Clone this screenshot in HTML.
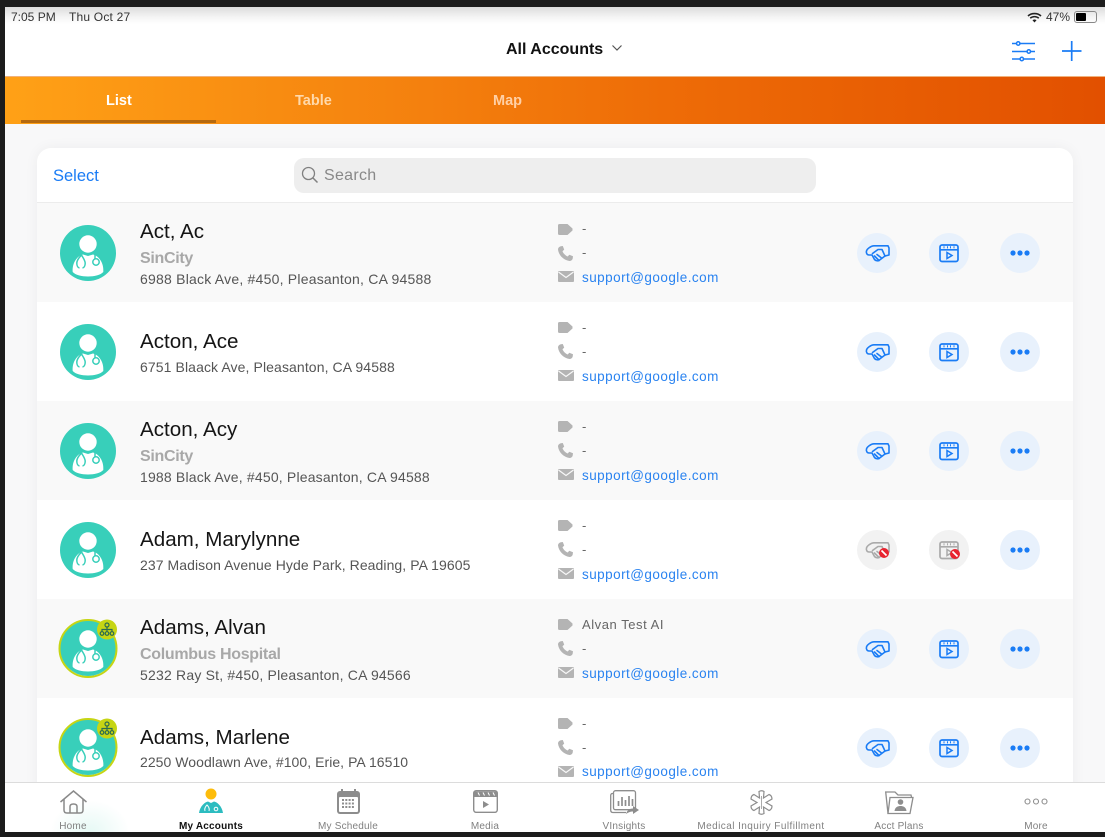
<!DOCTYPE html>
<html><head><meta charset="utf-8"><title>All Accounts</title>
<style>
*{box-sizing:border-box}
html,body{margin:0;padding:0}
body{width:1105px;height:836px;overflow:hidden;background:#1c1c1c;position:relative;font-family:"Liberation Sans",sans-serif;color:#111}
.a{position:absolute}
.t{position:absolute;white-space:nowrap;line-height:20px;height:20px}
.band{position:absolute;left:37px;width:1036px;height:99px}
.n{left:140px;font-size:20.600px;color:#151515;margin-top:1px}
.s{left:140px;font-size:16px;font-weight:bold;color:#a8a8a8;letter-spacing:-.3px;margin-top:2px}
.d{left:140px;font-size:14px;color:#555}
.c{left:582px;font-size:13px;color:#666;letter-spacing:.55px;margin-top:1px}
.m{left:582px;font-size:13.5px;color:#2a83f0;letter-spacing:.46px;margin-top:1px}
.l{font-size:10px;color:#808080;text-align:center;width:160px;letter-spacing:.2px;top:817px}
svg{position:absolute;overflow:visible}
.b{position:absolute;width:40px;height:40px;border-radius:50%;background:#e8f1fc}
.g{background:#f2f2f2}
</style></head><body>
<svg width="0" height="0" style="position:absolute">
<defs>
<symbol id="av" viewBox="0 0 56 56" overflow="visible">
<circle cx="28" cy="28" r="28" fill="#38cfba"/>
<circle cx="28" cy="19" r="8.700" fill="#fff"/>
<path d="M12.700 47C12 38 17 31 23 29.500L28 31L33 29.500C39 31 44 38 43.300 47C38 53 18 53 12.700 47Z" fill="#fff"/>
<path d="M21.500 30C20 32 17 34 16.800 38C16.800 41 18 42.800 19.500 43M21.500 30C22.500 32 25 35 25.200 38C25.200 41 24 42.800 22.500 43" fill="none" stroke="#38cfba" stroke-width="1.500"/>
<path d="M35 29.500V33.500" stroke="#38cfba" stroke-width="1.500"/>
<circle cx="36" cy="37" r="3.200" fill="none" stroke="#38cfba" stroke-width="1.500"/>
</symbol>
<symbol id="avb" viewBox="-4 -4 64 64" overflow="visible">
<use href="#av" x="0" y="0" width="56" height="56"/>
<circle cx="28" cy="28.500" r="28.500" fill="none" stroke="#c6d514" stroke-width="2"/>
<circle cx="47" cy="9.500" r="10" fill="#c6d514"/>
<g fill="none" stroke="#2c6b50" stroke-width="1.200"><circle cx="47" cy="5" r="2"/><circle cx="42" cy="13.500" r="1.800"/><circle cx="47" cy="13.500" r="1.800"/><circle cx="52" cy="13.500" r="1.800"/><path d="M47 7V11.500M42 11.500V9.500H52V11.500"/></g>
</symbol>
<symbol id="hs" viewBox="-1 -2 25 19" overflow="visible">
<g fill="none" stroke="currentColor" stroke-width="1.600" stroke-linejoin="round" stroke-linecap="round">
<path d="M8 .8H22L23 3V10L19 11L13 15.500C12 16 10 16 8.500 14.500L6 10H3C1 10 0 8 .5 6C1 4 5 .8 8 .8Z"/>
<path d="M6.500 8.500L12 4.500H16L19 11M8.500 11L13 15.500M11 9.500L15.500 13"/>
</g></symbol>
<symbol id="vd" viewBox="0 0 20 19" overflow="visible">
<rect x="1" y="1" width="18" height="16.500" rx="2" fill="none" stroke="currentColor" stroke-width="1.700"/>
<path d="M1 5.800H19" stroke="currentColor" stroke-width="1.700"/>
<path d="M4.500 3.300H5.500M8 3.300H9M11 3.300H12M14.500 3.300H15.500" stroke="currentColor" stroke-width="2.200"/>
<path d="M8 8.500L13 11.500L8 14.500Z" fill="none" stroke="currentColor" stroke-width="1.500"/>
</symbol>
<symbol id="no" viewBox="0 0 10 10"><circle cx="5" cy="5" r="5" fill="#e8232f"/><path d="M2.500 2.500L7.500 7.500" stroke="#fff" stroke-width="1.700"/></symbol>
<symbol id="tag" viewBox="0 0 15 11"><path d="M1.500 0H9.500L14.500 4.500V6.500L9.500 11H1.500A1.500 1.500 0 0 1 0 9.500V1.500A1.500 1.500 0 0 1 1.500 0Z" fill="#b4b4b4"/></symbol>
<symbol id="ph" viewBox="0 0 15 15"><path d="M2.800.3L4.800 0L6.200 3.600L4.500 5.200C5.200 7.200 7.500 9.700 9.700 10.500L11.300 8.800L15 10.300L14.700 12.500C14.300 14.300 12.800 15 11.500 15C5.500 14.200 .8 9.300 0 3.500C0 2 1 .7 2.800.3Z" fill="#b4b4b4"/></symbol>
<symbol id="ml" viewBox="0 0 16 11"><rect width="16" height="11" rx="1" fill="#b4b4b4"/><path d="M.5 1L8 6.500L15.500 1" fill="none" stroke="#f8f8f8" stroke-width="1.200"/></symbol>
</defs></svg>

<div class="a" style="left:5px;top:7px;width:1100px;height:825px;background:#f8f8f9"></div>
<div class="a" style="left:5px;top:7px;width:1100px;height:69px;background:linear-gradient(#dcdcdc 0,#f4f4f4 10px,#fff 17px)"></div>
<div class="t" style="left:11px;top:7px;font-size:12px;color:#333">7:05 PM</div>
<div class="t" style="left:69px;top:7px;font-size:12px;color:#333;letter-spacing:.2px">Thu Oct 27</div>
<svg style="left:1027px;top:12px" width="15" height="11" viewBox="0 0 15 11"><path d="M1 4C4.500.8 10.500.8 14 4M3.200 6.200C5.600 4.100 9.400 4.100 11.800 6.200" fill="none" stroke="#222" stroke-width="1.600"/><path d="M5.500 8.300C6.700 7.300 8.300 7.300 9.500 8.300L7.500 10.500Z" fill="#222"/></svg>
<div class="t" style="left:1046px;top:7px;font-size:12px;color:#333">47%</div>
<div class="a" style="left:1074px;top:11px;width:23px;height:12px;border:1px solid #888;border-radius:3px"><div style="width:10px;height:8px;margin:1px;background:#000;border-radius:1px"></div></div>

<div class="t" style="left:506px;top:39px;margin-top:0;font-size:16px;font-weight:bold;color:#111;padding-top:1px">All Accounts</div>
<svg style="left:612px;top:45px" width="10" height="6" viewBox="0 0 10 6"><path d="M.5.500L5 5L9.500.500" fill="none" stroke="#555" stroke-width="1.200"/></svg>
<svg style="left:1012px;top:41px" width="24" height="20" viewBox="0 0 24 20"><g fill="none" stroke="#1a7cf5" stroke-width="1.500"><path d="M0 2.500H4.500M8 2.500H23M0 10.500H15M18.500 10.500H23M0 18H8M11.500 18H23"/><circle cx="6.200" cy="2.500" r="1.700"/><circle cx="16.800" cy="10.500" r="1.700"/><circle cx="9.800" cy="18" r="1.700"/></g></svg>
<svg style="left:1062px;top:41px" width="20" height="20" viewBox="0 0 20 20"><path d="M0 10H19.500M9.700 0V20" stroke="#1a7cf5" stroke-width="1.700"/></svg>

<div class="a" style="left:5px;top:76px;width:1100px;height:48px;background:linear-gradient(90deg,#ffa116,#f5830f 35%,#ee6c07 60%,#e25000);border-top:1px solid #f1b27c"></div>
<div class="t" style="left:106px;top:91px;font-size:14.500px;font-weight:bold;color:#fff">List</div>
<div class="t" style="left:295px;top:91px;font-size:14.500px;font-weight:bold;color:#ffd9ab">Table</div>
<div class="t" style="left:493px;top:91px;font-size:14.500px;font-weight:bold;color:#ffd0a6">Map</div>
<div class="a" style="left:21px;top:120px;width:195px;height:3px;background:#b5690f"></div>

<div class="a" style="left:37px;top:148px;width:1036px;height:680px;background:#fff;border-radius:14px 14px 0 0;box-shadow:0 0 14px rgba(0,0,0,.05)"></div>
<div class="t" style="left:53px;top:166px;font-size:16.500px;color:#1a7cf5">Select</div>
<div class="a" style="left:294px;top:158px;width:522px;height:35px;background:#eee;border-radius:10px"></div>
<svg style="left:301px;top:166px" width="18" height="18" viewBox="0 0 18 18"><circle cx="7.500" cy="7.500" r="6" fill="none" stroke="#808080" stroke-width="1.300"/><path d="M12 12L16.500 16.500" stroke="#808080" stroke-width="1.500"/></svg>
<div class="t" style="left:324px;top:166px;font-size:16px;color:#888;letter-spacing:.3px">Search</div>
<div class="a" style="left:37px;top:202px;width:1036px;height:1px;background:#ececec"></div>

<div class="band" style="top:203px;background:#f9f9f9"></div>
<div class="band" style="top:401px;background:#f9f9f9"></div>
<div class="band" style="top:599px;background:#f9f9f9"></div>

<!-- row 1 -->
<svg style="left:60px;top:225px" width="56" height="56"><use href="#av" width="56" height="56"/></svg>
<div class="t n" style="top:221px">Act, Ac</div>
<div class="t s" style="top:247px">SinCity</div>
<div class="t d" style="top:269px;letter-spacing:.22px">6988 Black Ave, #450, Pleasanton, CA 94588</div>
<svg style="left:558px;top:223.500px" width="15" height="11"><use href="#tag" width="15" height="11"/></svg>
<div class="t c" style="top:218px">-</div>
<svg style="left:558px;top:245.500px" width="15" height="15"><use href="#ph" width="15" height="15"/></svg>
<div class="t c" style="top:242px">-</div>
<svg style="left:558px;top:271px" width="16" height="11"><use href="#ml" width="16" height="11"/></svg>
<div class="t m" style="top:267px">support@google.com</div>
<div class="b" style="left:857px;top:233px"></div><svg style="left:865px;top:243px;color:#1a7cf5" width="25" height="19"><use href="#hs" width="25" height="19"/></svg>
<div class="b" style="left:929px;top:233px"></div><svg style="left:939px;top:244px;color:#1a7cf5" width="20" height="19"><use href="#vd" width="20" height="19"/></svg>
<div class="b" style="left:1000px;top:233px"></div><svg style="left:1010px;top:250px" width="20" height="6"><circle cx="3" cy="3" r="2.600" fill="#1a7cf5"/><circle cx="10" cy="3" r="2.600" fill="#1a7cf5"/><circle cx="17" cy="3" r="2.600" fill="#1a7cf5"/></svg>

<!-- row 2 -->
<svg style="left:60px;top:324px" width="56" height="56"><use href="#av" width="56" height="56"/></svg>
<div class="t n" style="top:331px">Acton, Ace</div>
<div class="t d" style="top:357px;letter-spacing:.1px">6751 Blaack Ave, Pleasanton, CA 94588</div>
<svg style="left:558px;top:322px" width="15" height="11"><use href="#tag" width="15" height="11"/></svg>
<div class="t c" style="top:317px">-</div>
<svg style="left:558px;top:344px" width="15" height="15"><use href="#ph" width="15" height="15"/></svg>
<div class="t c" style="top:341px">-</div>
<svg style="left:558px;top:370px" width="16" height="11"><use href="#ml" width="16" height="11"/></svg>
<div class="t m" style="top:365.500px">support@google.com</div>
<div class="b" style="left:857px;top:332px"></div><svg style="left:865px;top:342px;color:#1a7cf5" width="25" height="19"><use href="#hs" width="25" height="19"/></svg>
<div class="b" style="left:929px;top:332px"></div><svg style="left:939px;top:343px;color:#1a7cf5" width="20" height="19"><use href="#vd" width="20" height="19"/></svg>
<div class="b" style="left:1000px;top:332px"></div><svg style="left:1010px;top:349px" width="20" height="6"><circle cx="3" cy="3" r="2.600" fill="#1a7cf5"/><circle cx="10" cy="3" r="2.600" fill="#1a7cf5"/><circle cx="17" cy="3" r="2.600" fill="#1a7cf5"/></svg>

<!-- row 3 -->
<svg style="left:60px;top:423px" width="56" height="56"><use href="#av" width="56" height="56"/></svg>
<div class="t n" style="top:419px">Acton, Acy</div>
<div class="t s" style="top:445px">SinCity</div>
<div class="t d" style="top:467px;letter-spacing:.18px">1988 Black Ave, #450, Pleasanton, CA 94588</div>
<svg style="left:558px;top:421px" width="15" height="11"><use href="#tag" width="15" height="11"/></svg>
<div class="t c" style="top:416px">-</div>
<svg style="left:558px;top:443px" width="15" height="15"><use href="#ph" width="15" height="15"/></svg>
<div class="t c" style="top:440px">-</div>
<svg style="left:558px;top:469px" width="16" height="11"><use href="#ml" width="16" height="11"/></svg>
<div class="t m" style="top:464.500px">support@google.com</div>
<div class="b" style="left:857px;top:431px"></div><svg style="left:865px;top:441px;color:#1a7cf5" width="25" height="19"><use href="#hs" width="25" height="19"/></svg>
<div class="b" style="left:929px;top:431px"></div><svg style="left:939px;top:442px;color:#1a7cf5" width="20" height="19"><use href="#vd" width="20" height="19"/></svg>
<div class="b" style="left:1000px;top:431px"></div><svg style="left:1010px;top:448px" width="20" height="6"><circle cx="3" cy="3" r="2.600" fill="#1a7cf5"/><circle cx="10" cy="3" r="2.600" fill="#1a7cf5"/><circle cx="17" cy="3" r="2.600" fill="#1a7cf5"/></svg>

<!-- row 4 -->
<svg style="left:60px;top:522px" width="56" height="56"><use href="#av" width="56" height="56"/></svg>
<div class="t n" style="top:529px">Adam, Marylynne</div>
<div class="t d" style="top:555px;letter-spacing:.07px">237 Madison Avenue Hyde Park, Reading, PA 19605</div>
<svg style="left:558px;top:520px" width="15" height="11"><use href="#tag" width="15" height="11"/></svg>
<div class="t c" style="top:515px">-</div>
<svg style="left:558px;top:542px" width="15" height="15"><use href="#ph" width="15" height="15"/></svg>
<div class="t c" style="top:539px">-</div>
<svg style="left:558px;top:568px" width="16" height="11"><use href="#ml" width="16" height="11"/></svg>
<div class="t m" style="top:563.500px">support@google.com</div>
<div class="b g" style="left:857px;top:530px"></div><svg style="left:865px;top:540px;color:#aaa" width="25" height="19"><use href="#hs" width="25" height="19"/></svg><svg style="left:879px;top:548px" width="10" height="10"><use href="#no" width="10" height="10"/></svg>
<div class="b g" style="left:929px;top:530px"></div><svg style="left:939px;top:541px;color:#aaa" width="20" height="19"><use href="#vd" width="20" height="19"/></svg><svg style="left:950px;top:549px" width="10" height="10"><use href="#no" width="10" height="10"/></svg>
<div class="b" style="left:1000px;top:530px"></div><svg style="left:1010px;top:547px" width="20" height="6"><circle cx="3" cy="3" r="2.600" fill="#1a7cf5"/><circle cx="10" cy="3" r="2.600" fill="#1a7cf5"/><circle cx="17" cy="3" r="2.600" fill="#1a7cf5"/></svg>

<!-- row 5 -->
<svg style="left:60px;top:620px" width="56" height="56"><use href="#avb" x="-4" y="-4" width="64" height="64"/></svg>
<div class="t n" style="top:617px">Adams, Alvan</div>
<div class="t s" style="top:643px">Columbus Hospital</div>
<div class="t d" style="top:665px;letter-spacing:.2px">5232 Ray St, #450, Pleasanton, CA 94566</div>
<svg style="left:558px;top:619px" width="15" height="11"><use href="#tag" width="15" height="11"/></svg>
<div class="t c" style="top:614px">Alvan Test AI</div>
<svg style="left:558px;top:641px" width="15" height="15"><use href="#ph" width="15" height="15"/></svg>
<div class="t c" style="top:638px">-</div>
<svg style="left:558px;top:667px" width="16" height="11"><use href="#ml" width="16" height="11"/></svg>
<div class="t m" style="top:662.500px">support@google.com</div>
<div class="b" style="left:857px;top:629px"></div><svg style="left:865px;top:639px;color:#1a7cf5" width="25" height="19"><use href="#hs" width="25" height="19"/></svg>
<div class="b" style="left:929px;top:629px"></div><svg style="left:939px;top:640px;color:#1a7cf5" width="20" height="19"><use href="#vd" width="20" height="19"/></svg>
<div class="b" style="left:1000px;top:629px"></div><svg style="left:1010px;top:646px" width="20" height="6"><circle cx="3" cy="3" r="2.600" fill="#1a7cf5"/><circle cx="10" cy="3" r="2.600" fill="#1a7cf5"/><circle cx="17" cy="3" r="2.600" fill="#1a7cf5"/></svg>

<!-- row 6 -->
<svg style="left:60px;top:719px" width="56" height="56"><use href="#avb" x="-4" y="-4" width="64" height="64"/></svg>
<div class="t n" style="top:727px">Adams, Marlene</div>
<div class="t d" style="top:752px;letter-spacing:.05px">2250 Woodlawn Ave, #100, Erie, PA 16510</div>
<svg style="left:558px;top:718px" width="15" height="11"><use href="#tag" width="15" height="11"/></svg>
<div class="t c" style="top:713px">-</div>
<svg style="left:558px;top:740px" width="15" height="15"><use href="#ph" width="15" height="15"/></svg>
<div class="t c" style="top:737px">-</div>
<svg style="left:558px;top:766px" width="16" height="11"><use href="#ml" width="16" height="11"/></svg>
<div class="t m" style="top:761px">support@google.com</div>
<div class="b" style="left:857px;top:728px"></div><svg style="left:865px;top:738px;color:#1a7cf5" width="25" height="19"><use href="#hs" width="25" height="19"/></svg>
<div class="b" style="left:929px;top:728px"></div><svg style="left:939px;top:739px;color:#1a7cf5" width="20" height="19"><use href="#vd" width="20" height="19"/></svg>
<div class="b" style="left:1000px;top:728px"></div><svg style="left:1010px;top:745px" width="20" height="6"><circle cx="3" cy="3" r="2.600" fill="#1a7cf5"/><circle cx="10" cy="3" r="2.600" fill="#1a7cf5"/><circle cx="17" cy="3" r="2.600" fill="#1a7cf5"/></svg>

<!-- tab bar -->
<div class="a" style="left:5px;top:782px;width:1100px;height:50px;background:#fff;border-top:1px solid #dcdcdc"></div>
<div class="a" style="left:50px;top:800px;width:80px;height:32px;background:radial-gradient(ellipse at 50% 100%,#e6f9f5,#fff 70%)"></div>
<svg style="left:60px;top:790px" width="27" height="24" viewBox="0 0 27 24"><g fill="none" stroke="#8a8a8a" stroke-width="1.500"><path d="M.5 12L13.500 1L26.500 12"/><path d="M4 9.500V20Q4 23 7 23H20Q23 23 23 20V9.500"/><path d="M10 23V16.500Q10 14 13.500 14Q17 14 17 16.500V23"/></g></svg>
<svg style="left:199px;top:788px" width="24" height="25" viewBox="0 0 24 25"><circle cx="12" cy="6" r="5.500" fill="#fdbc0b"/><path d="M0 25C1 18 6 14 9 13.500L12 15L15 13.500C18 14 23 18 24 25Z" fill="#2cbcc0"/><g fill="none" stroke="#fff" stroke-width="1"><path d="M6 23C5 20 7 18 8 17C9 18 11 20 10 23"/><circle cx="17" cy="21" r="1.800"/></g></svg>
<svg style="left:337px;top:789px" width="23" height="25" viewBox="0 0 23 25"><rect y="2" width="23" height="23" rx="3" fill="#8d8d8d"/><rect x="2" y="8" width="19" height="15" rx="1" fill="#fff"/><path d="M5 0V4M18 0V4" stroke="#8d8d8d" stroke-width="2"/><path d="M5 11H18M5 14.500H18M5 18H18" stroke="#8d8d8d" stroke-width="2" stroke-dasharray="2 1.300"/></svg>
<svg style="left:473px;top:790px" width="25" height="23" viewBox="0 0 25 23"><rect x=".7" y=".7" width="23.600" height="21.600" rx="2.500" fill="#fff" stroke="#8d8d8d" stroke-width="1.400"/><path d="M1 1.500H24V7H1Z" fill="#8d8d8d"/><path d="M5 2.500L6.500 5.500M10 2.500L11.500 5.500M15 2.500L16.500 5.500M20 2.500L21.500 5.500" stroke="#fff" stroke-width="1"/><path d="M10 11L16 14.500L10 18Z" fill="#8d8d8d"/></svg>
<svg style="left:610px;top:790px" width="29" height="25" viewBox="0 0 29 25"><g fill="none" stroke="#8d8d8d" stroke-width="1.300"><rect x="3.500" y=".7" width="22" height="19" rx="2"/><path d="M3.500 3.500H2.500Q.7 3.500 .7 5.500V20Q.7 22.500 3 22.500H16"/><path d="M8.500 16V11M12 16V7M15.500 16V10M19 16V6M22.500 16V9" stroke-width="1.700"/></g><path d="M16 24C17 20 20 18.500 23 18.500V16L29 20L23 24V21.500C20 21.500 18 22.500 16 24Z" fill="#8d8d8d"/></svg>
<svg style="left:750px;top:790px" width="23" height="25" viewBox="0 0 23 25"><path d="M9 1.500Q11.500 0 14 1.500L13.500 8L19 4.500Q22 5.500 22 9L16 12.500L22 16Q22 19.500 19 20.500L13.500 17L14 23.500Q11.500 25 9 23.500L9.500 17L4 20.500Q1 19.500 1 16L7 12.500L1 9Q1 5.500 4 4.500L9.500 8Z" fill="none" stroke="#8d8d8d" stroke-width="1.200"/><path d="M11.500 6V19" stroke="#aaa" stroke-width="1"/></svg>
<svg style="left:885px;top:791px" width="29" height="24" viewBox="0 0 29 24"><g fill="none" stroke="#8d8d8d" stroke-width="1.300"><path d="M3 22.500L.7 1H10L13 4H26L26.500 6"/><path d="M3 22.500H25L28 6.500H5Z"/></g><circle cx="15.500" cy="11" r="2.800" fill="#8d8d8d"/><path d="M9.500 20C10 16 13 15 15.500 15C18 15 21 16 21.500 20Z" fill="#8d8d8d"/></svg>
<svg style="left:1024px;top:798px" width="24" height="7" viewBox="0 0 24 7"><g fill="none" stroke="#8d8d8d" stroke-width="1.100"><circle cx="3.500" cy="3.500" r="2.500"/><circle cx="12" cy="3.500" r="2.500"/><circle cx="20.500" cy="3.500" r="2.500"/></g></svg>

<div class="t l" style="left:-7px">Home</div>
<div class="t l" style="left:131px;color:#111;font-weight:bold">My Accounts</div>
<div class="t l" style="left:268px">My Schedule</div>
<div class="t l" style="left:405px">Media</div>
<div class="t l" style="left:544px">VInsights</div>
<div class="t l" style="left:681px;letter-spacing:.43px">Medical Inquiry Fulfillment</div>
<div class="t l" style="left:819px">Acct Plans</div>
<div class="t l" style="left:956px">More</div>

<div class="a" style="left:0;top:0;width:1105px;height:7px;background:#1c1c1c"></div>
<div class="a" style="left:0;top:0;width:5px;height:836px;background:#1c1c1c"></div>
<div class="a" style="left:0;top:832px;width:1105px;height:4px;background:#1c1c1c"></div>
</body></html>
